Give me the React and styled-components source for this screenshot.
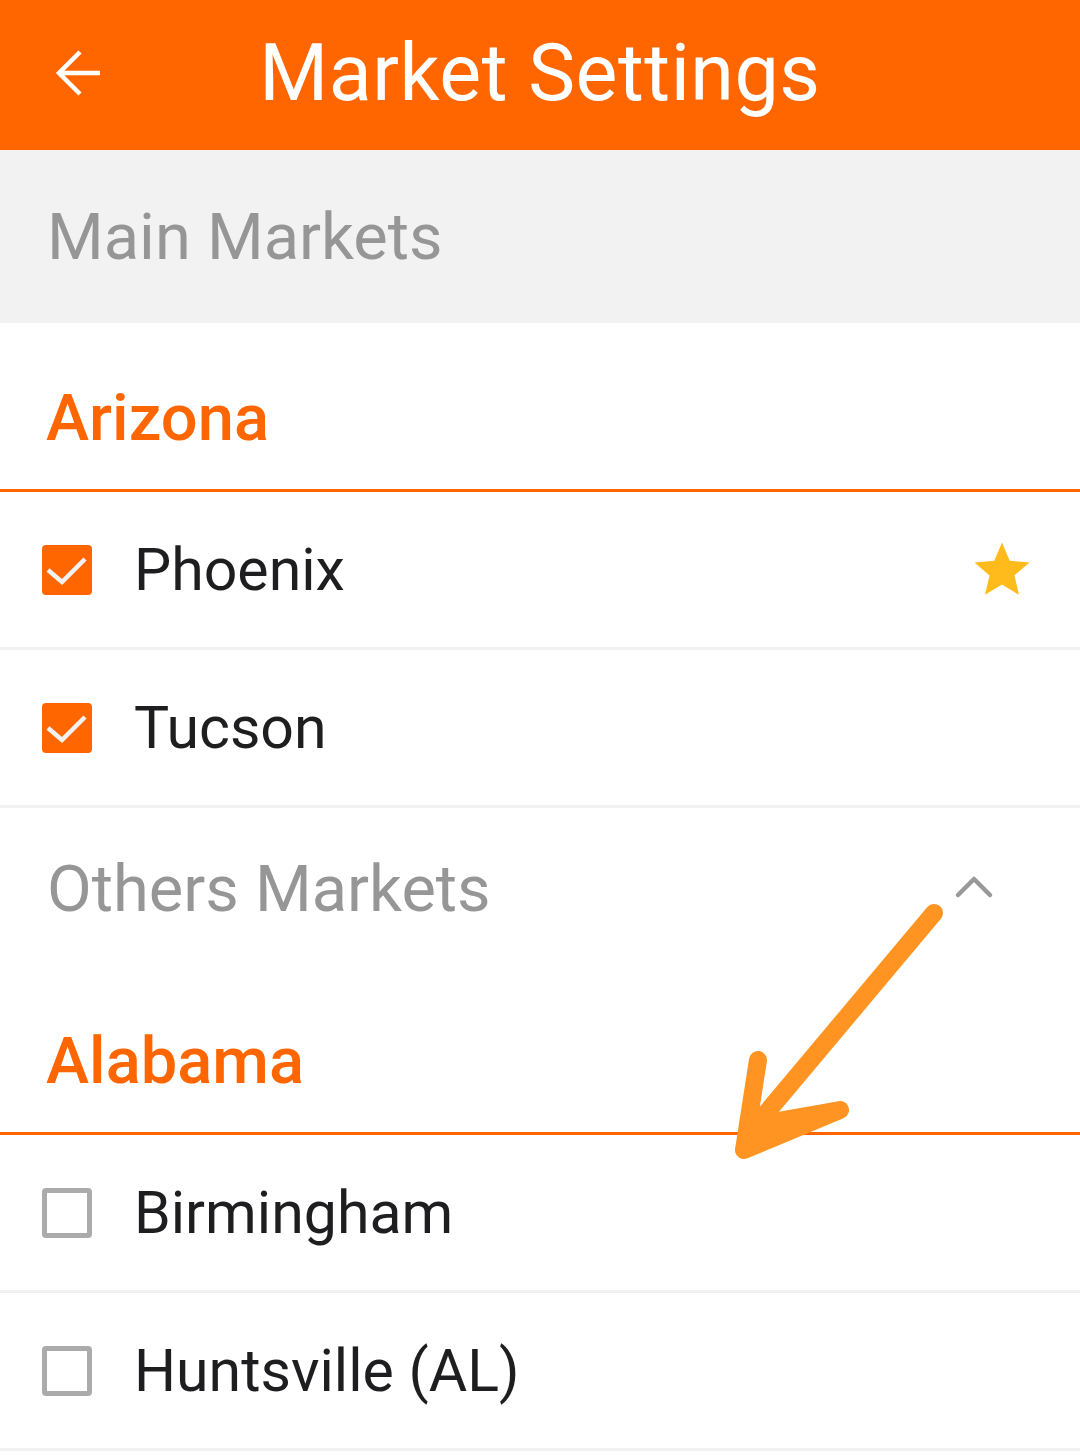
import React from "react";
import styled, { createGlobalStyle } from "styled-components";

const GlobalStyle = createGlobalStyle`
  html, body {
    margin: 0;
    padding: 0;
    background: #ffffff;
  }
  body {
    font-family: Roboto, "Noto Sans", "Liberation Sans", sans-serif;
  }
`;

const Page = styled.div`
  position: relative;
  width: 1080px;
  min-height: 1456px;
  background: #ffffff;
  overflow: hidden;
`;

const Header = styled.header`
  height: 150px;
  background: #ff6600;
  display: flex;
  align-items: center;
  justify-content: center;
  position: relative;
`;

const BackButton = styled.button`
  position: absolute;
  left: 50px;
  top: 45px;
  width: 56px;
  height: 56px;
  padding: 0;
  border: none;
  background: transparent;
  display: flex;
  align-items: center;
  justify-content: center;
`;

const Title = styled.h1`
  margin: -4px 0 0;
  color: #ffffff;
  font-size: 79px;
  font-weight: 400;
  letter-spacing: 0.5px;
  line-height: 1;
`;

const SectionBand = styled.div`
  height: ${({ $h }) => $h}px;
  background: ${({ $shade }) => ($shade ? "#f2f2f2" : "#ffffff")};
  display: flex;
  align-items: flex-start;
  justify-content: space-between;
  padding: ${({ $top }) => $top}px 86px 0 47px;
  box-sizing: border-box;
`;

const SectionTitle = styled.h2`
  margin: 0;
  color: #969696;
  font-size: 65px;
  font-weight: 400;
  line-height: 1;
`;

const Chevron = styled.svg`
  margin-top: 17px;
`;

const StateHeader = styled.div`
  height: ${({ $h }) => $h}px;
  border-bottom: 3px solid #ff6600;
  display: flex;
  align-items: flex-end;
  padding: 0 0 38px 46px;
  box-sizing: border-box;
`;

const StateName = styled.h3`
  margin: 0;
  color: #ff6600;
  font-size: 65px;
  font-weight: 500;
  line-height: 1;
`;

const Row = styled.label`
  height: 158px;
  border-bottom: 3px solid #f1f1f1;
  box-sizing: border-box;
  display: flex;
  align-items: center;
  padding: 0 45px 0 42px;
`;

const Box = styled.span`
  width: 50px;
  height: 50px;
  box-sizing: border-box;
  border-radius: 4px;
  flex-shrink: 0;
  background: ${({ $checked }) => ($checked ? "#ff6600" : "#ffffff")};
  border: ${({ $checked }) => ($checked ? "none" : "5px solid #ababab")};
  display: flex;
  align-items: center;
  justify-content: center;
`;

const CityName = styled.span`
  margin-left: 42px;
  color: #1e1e20;
  font-size: 59px;
  font-weight: 400;
  line-height: 1;
  flex: 1;
`;

const Annotation = styled.svg`
  position: absolute;
  left: 0;
  top: 0;
  pointer-events: none;
`;

const Checkbox = ({ checked }) => (
  <Box $checked={checked}>
    {checked && (
      <svg width="50" height="50" viewBox="0 0 50 50">
        <polyline
          points="6,25 20,37 43,14"
          fill="none"
          stroke="#f2f2f2"
          strokeWidth="4.5"
        />
      </svg>
    )}
  </Box>
);

const Star = () => (
  <svg width="66" height="66" viewBox="0 0 24 24">
    <path
      fill="#ffbb1c"
      d="M12 17.27L18.18 21l-1.64-7.03L22 9.24l-7.19-.61L12 2 9.19 8.63 2 9.24l5.46 4.73L5.82 21z"
    />
  </svg>
);

const City = ({ name, checked, starred }) => (
  <Row>
    <Checkbox checked={checked} />
    <CityName>{name}</CityName>
    {starred && <Star />}
  </Row>
);

export default function App() {
  return (
    <Page>
      <GlobalStyle />
      <Header>
        <BackButton aria-label="Back">
          <svg width="56" height="56" viewBox="0 0 56 56">
            <path
              d="M50 28H9 M30 7L9 28l21 21"
              fill="none"
              stroke="#ffffff"
              strokeWidth="4.5"
            />
          </svg>
        </BackButton>
        <Title>Market Settings</Title>
      </Header>

      <SectionBand $shade $h={173} $top={55}>
        <SectionTitle>Main Markets</SectionTitle>
      </SectionBand>

      <StateHeader $h={169}>
        <StateName>Arizona</StateName>
      </StateHeader>
      <City name="Phoenix" checked starred />
      <City name="Tucson" checked />

      <SectionBand $h={159} $top={49}>
        <SectionTitle>Others Markets</SectionTitle>
        <Chevron width="40" height="26" viewBox="0 0 40 26">
          <polyline
            points="4,21 20,5 36,21"
            fill="none"
            stroke="#999999"
            strokeWidth="4.5"
            strokeLinecap="round"
            strokeLinejoin="round"
          />
        </Chevron>
      </SectionBand>

      <StateHeader $h={168}>
        <StateName>Alabama</StateName>
      </StateHeader>
      <City name="Birmingham" />
      <City name="Huntsville (AL)" />

      <Annotation width="1080" height="1456" viewBox="0 0 1080 1456">
        <g
          fill="none"
          stroke="#ff9422"
          strokeWidth="18"
          strokeLinecap="round"
          strokeLinejoin="round"
        >
          <path d="M934 913 L752 1130" />
          <path d="M758 1060 L744 1150 L840 1110 L762 1124" />
        </g>
      </Annotation>
    </Page>
  );
}
